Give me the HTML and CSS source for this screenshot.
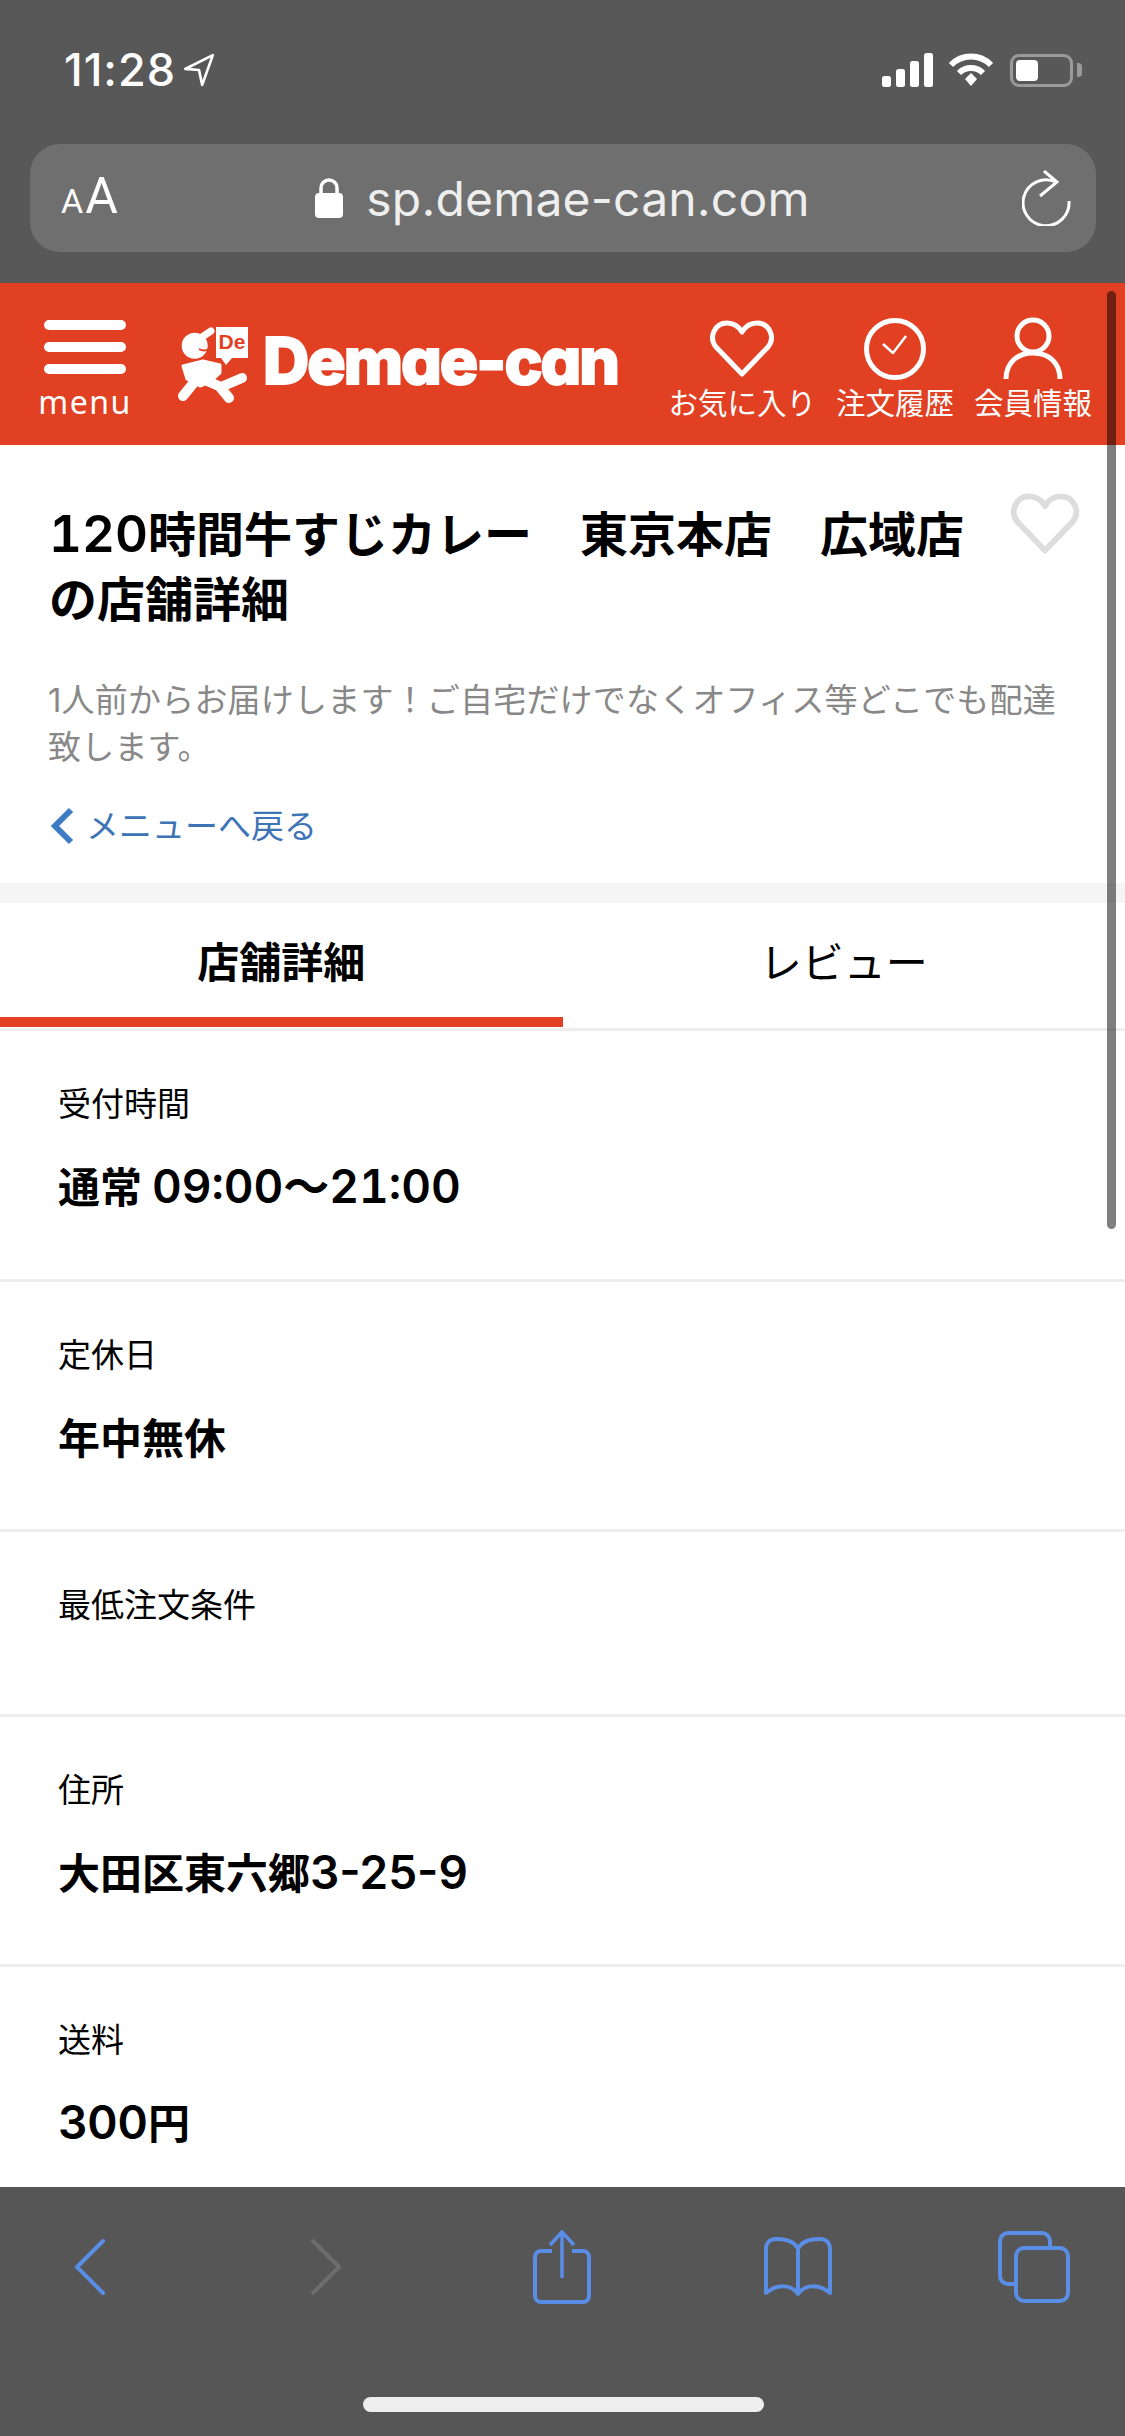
FILE: index.html
```html
<!DOCTYPE html>
<html lang="ja">
<head>
    <meta charset="UTF-8">
    <meta name="viewport" content="width=device-width, initial-scale=1.0">
    <title>120時間牛すじカレー 店舗詳細</title>
    <link rel="stylesheet" href="styles.css">
</head>
<body>
    <div class="screen">
        <div class="browser-top">
            <div class="status">
                <div class="clock">
                    <span class="time">11:28</span>
                    <svg class="loc" width="34" height="34" viewBox="0 0 30 32"><path d="M2 15 L28 2 L18 30 L15 16 Z" fill="none" stroke="#fff" stroke-width="2.5" stroke-linejoin="round"/></svg>
                </div>
                <div class="status-icons">
                    <svg width="52" height="34" viewBox="0 0 52 34"><rect x="0" y="23" width="9" height="11" rx="2.5" fill="#fff"/><rect x="14" y="16" width="9" height="18" rx="2.5" fill="#fff"/><rect x="28" y="8" width="9" height="26" rx="2.5" fill="#fff"/><rect x="42" y="0" width="9" height="34" rx="2.5" fill="#fff"/></svg>
                    <svg width="46" height="34" viewBox="0 0 46 34"><path d="M3 12 A28 28 0 0 1 43 12" fill="none" stroke="#fff" stroke-width="6"/><path d="M11 20 A17 17 0 0 1 35 20" fill="none" stroke="#fff" stroke-width="6"/><path d="M17 26 L23 20 L29 26 L23 33 Z" fill="#fff"/></svg>
                    <div class="battery"><div class="battery-level"></div></div>
                    <div class="battery-cap"></div>
                </div>
            </div>
            <div class="urlbar">
                <span class="aa"><small>A</small>A</span>
                <div class="url">
                    <svg width="28" height="40" viewBox="0 0 28 40"><path d="M6 17 V10 A8 8 0 0 1 22 10 V17" fill="none" stroke="#fff" stroke-width="3.5"/><rect x="0" y="15" width="28" height="25" rx="4" fill="#fff"/></svg>
                    <span>sp.demae-can.com</span>
                </div>
                <svg class="reload" width="50" height="56" viewBox="0 0 50 56"><path d="M34 12 A23 23 0 1 0 47 31" fill="none" stroke="#fff" stroke-width="3"/><path d="M22 1 L35 12 L18 26" fill="none" stroke="#fff" stroke-width="3"/></svg>
            </div>
        </div>

        <div class="content">
            <div class="scrollbar"></div>
            <header class="site-header">
                <div class="menu-btn">
                    <div class="bars"><i></i><i></i><i></i></div>
                    <span>menu</span>
                </div>
                <div class="logo">
                    <svg width="76" height="84" viewBox="0 0 76 84">
                        <circle cx="20.7" cy="23.7" r="13" fill="#fff"/>
                        <path d="M25 17 L37 9" stroke="#fff" stroke-width="7" stroke-linecap="round"/>
                        <path d="M25 27 Q30 30 35 27" fill="none" stroke="#e14023" stroke-width="2"/>
                        <path d="M42 5 H74 V36 H58 L52 43 L47 36 H42 Z" fill="#fff"/>
                        <text x="58" y="27" class="logo-de">De</text>
                        <path d="M9 44 L29 39 L46 43 L46 51 L36 60 L26 64 L13 57 Z" fill="#fff" stroke="#fff" stroke-width="3" stroke-linejoin="round"/>
                        <path d="M22 58 L9 74 M31 58 L47 65 L68 56 M46 65 L55 76" fill="none" stroke="#fff" stroke-width="10" stroke-linecap="round" stroke-linejoin="round"/>
                    </svg>
                    <span class="logo-text">Demae-can</span>
                </div>
                <nav class="header-nav">
                    <div class="nav-item fav">
                        <svg width="66" height="60" viewBox="0 0 66 60"><path d="M33 55 L7 28 C-1 18 6 4 18 4 C25 4 30 8 33 13 C36 8 41 4 48 4 C60 4 67 18 59 28 Z" fill="none" stroke="#fff" stroke-width="5" stroke-linejoin="round"/></svg>
                        <span>お気に入り</span>
                    </div>
                    <div class="nav-item hist">
                        <svg width="64" height="64" viewBox="0 0 64 64"><circle cx="32" cy="32" r="28.5" fill="none" stroke="#fff" stroke-width="5"/><path d="M20 27 L30 36 L43 19" fill="none" stroke="#fff" stroke-width="2.5" stroke-linejoin="round"/></svg>
                        <span>注文履歴</span>
                    </div>
                    <div class="nav-item member">
                        <svg width="60" height="64" viewBox="0 0 60 64"><circle cx="30" cy="19" r="16" fill="none" stroke="#fff" stroke-width="5"/><path d="M3 62 C3 46 14 36 30 36 C46 36 57 46 57 62" fill="none" stroke="#fff" stroke-width="5"/></svg>
                        <span>会員情報</span>
                    </div>
                </nav>
            </header>

            <section class="shop-head">
                <div class="shop-title-row">
                    <h1><span class="num">120</span>時間牛すじカレー　東京本店　広域店<br>の店舗詳細</h1>
                    <svg class="shop-fav" width="70" height="64" viewBox="0 0 66 60"><path d="M33 55 L7 28 C-1 18 6 4 18 4 C25 4 30 8 33 13 C36 8 41 4 48 4 C60 4 67 18 59 28 Z" fill="none" stroke="#ddd" stroke-width="5.5" stroke-linejoin="round"/></svg>
                </div>
                <p class="shop-desc">1人前からお届けします！ご自宅だけでなくオフィス等どこでも配達致します。</p>
                <a class="back-link">
                    <svg width="24" height="38" viewBox="0 0 24 38"><path d="M21 3 L5 19 L21 35" fill="none" stroke="#3d7cc4" stroke-width="6"/></svg>
                    <span>メニューへ戻る</span>
                </a>
            </section>

            <div class="tabs">
                <div class="tab active">店舗詳細</div>
                <div class="tab">レビュー</div>
            </div>

            <dl class="info-row first">
                <dt>受付時間</dt>
                <dd>通常 <span class="num hours">09:00～21:00</span></dd>
            </dl>
            <dl class="info-row">
                <dt>定休日</dt>
                <dd>年中無休</dd>
            </dl>
            <dl class="info-row empty">
                <dt>最低注文条件</dt>
                <dd></dd>
            </dl>
            <dl class="info-row">
                <dt>住所</dt>
                <dd>大田区東六郷<span class="num">3-25-9</span></dd>
            </dl>
            <dl class="info-row">
                <dt>送料</dt>
                <dd><span class="num">300</span>円</dd>
            </dl>
        </div>

        <div class="browser-bottom">
            <div class="toolbar">
                <svg width="34" height="58" viewBox="0 0 34 58"><path d="M30 3 L4 29 L30 55" fill="none" stroke="#5a8de6" stroke-width="4" stroke-linecap="round" stroke-linejoin="round"/></svg>
                <svg width="34" height="58" viewBox="0 0 34 58"><path d="M4 3 L30 29 L4 55" fill="none" stroke="#6d6d6d" stroke-width="4" stroke-linecap="round" stroke-linejoin="round"/></svg>
                <svg width="58" height="74" viewBox="0 0 58 74"><path d="M19 21 H8 A6 6 0 0 0 2 27 V66 A6 6 0 0 0 8 72 H50 A6 6 0 0 0 56 66 V27 A6 6 0 0 0 50 21 H39" fill="none" stroke="#5a8de6" stroke-width="4"/><path d="M29 48 V3 M17 15 L29 2 L41 15" fill="none" stroke="#5a8de6" stroke-width="3.5"/></svg>
                <svg width="68" height="60" viewBox="0 0 68 60"><path d="M34 12 C30 3 20 2 12 2 C6 2 2 6 2 12 V56 C14 46 28 48 34 57 C40 48 54 46 66 56 V12 C66 6 62 2 56 2 C48 2 38 3 34 12 V57" fill="none" stroke="#5a8de6" stroke-width="4" stroke-linejoin="round"/></svg>
                <svg width="72" height="72" viewBox="0 0 72 72"><path d="M18 53 H10 A8 8 0 0 1 2 45 V10 A8 8 0 0 1 10 2 H44 A8 8 0 0 1 52 10 V17" fill="none" stroke="#5a8de6" stroke-width="4"/><rect x="18" y="17" width="52" height="53" rx="8" fill="none" stroke="#5a8de6" stroke-width="4"/></svg>
            </div>
            <div class="home-indicator"></div>
        </div>
    </div>
</body>
</html>
```

FILE: styles.css
```css
* {
    box-sizing: border-box;
}

body {
    margin: 0;
    background-color: #fff;
    font-family: Inter, "Noto Sans CJK JP", sans-serif;
    color: #000;
}

.screen {
    width: 1125px;
    height: 2436px;
    display: flex;
    flex-direction: column;
    overflow: hidden;
}

/* safari chrome */
.browser-top {
    height: 283px;
    flex: none;
    background-color: #585858;
    padding: 50px 29px 0 30px;
}

.status {
    height: 40px;
    display: flex;
    justify-content: space-between;
    align-items: center;
    padding: 0 0 0 34px;
}

.clock {
    display: flex;
    align-items: center;
    gap: 6px;
}

.time {
    font-weight: 500;
    font-size: 45px;
    line-height: 40px;
    letter-spacing: 1px;
    color: #fff;
}

.status-icons {
    display: flex;
    align-items: center;
    gap: 14px;
    padding-right: 14px;
}

.battery {
    width: 63px;
    height: 33px;
    margin-left: 2px;
    border: 3px solid #9a9a9a;
    border-radius: 9px;
    padding: 3px;
}

.battery-level {
    width: 22px;
    height: 100%;
    background-color: #fff;
    border-radius: 4px;
}

.battery-cap {
    width: 5px;
    height: 14px;
    margin-left: -10px;
    background-color: #9a9a9a;
    border-radius: 0 4px 4px 0;
}

.urlbar {
    margin-top: 54px;
    height: 108px;
    background-color: #6f6f6f;
    border-radius: 30px;
    display: grid;
    grid-template-columns: 1fr auto 1fr;
    align-items: center;
    padding: 0 32px 0 31px;
    color: #fff;
}

.aa {
    font-family: Roboto, sans-serif;
    font-size: 50px;
    line-height: 50px;
}

.aa small {
    font-size: 34px;
    margin-right: 2px;
}

.url {
    display: flex;
    align-items: center;
    gap: 23px;
    font-size: 48px;
    letter-spacing: 0.2px;
    color: #eee;
}

.reload {
    justify-self: end;
    margin-right: -8px;
}

/* page area */
.content {
    position: relative;
    flex: 1;
    overflow: hidden;
    background-color: #fff;
}

.scrollbar {
    position: absolute;
    top: 8px;
    right: 9px;
    width: 9px;
    height: 938px;
    background-color: rgba(0, 0, 0, 0.5);
    border-radius: 5px;
}

.site-header {
    height: 162px;
    background-color: #e14023;
    display: flex;
    align-items: flex-start;
    color: #fff;
    padding: 37px 0 0 39px;
}

.menu-btn {
    width: 92px;
    display: flex;
    flex-direction: column;
    align-items: center;
}

.bars {
    width: 82px;
    display: flex;
    flex-direction: column;
    gap: 12px;
}

.bars i {
    display: block;
    height: 10px;
    background-color: #fff;
    border-radius: 5px;
}

.menu-btn span {
    font-family: "Noto Sans", sans-serif;
    font-size: 32px;
    line-height: 36px;
    margin-top: 10px;
    letter-spacing: 1.5px;
    white-space: nowrap;
}

.logo {
    display: flex;
    align-items: flex-start;
    margin-left: 43px;
    margin-top: 2px;
}

.logo-de {
    font-family: "Liberation Sans", sans-serif;
    font-weight: bold;
    font-size: 21px;
    fill: #e14023;
    text-anchor: middle;
}

.logo-text {
    font-weight: 800;
    font-size: 64px;
    line-height: 60px;
    font-feature-settings: "cv11";
    margin: 9px 0 0 13px;
    letter-spacing: -2px;
    -webkit-text-stroke: 2px #fff;
    white-space: nowrap;
}

.header-nav {
    flex: 1;
    display: flex;
    justify-content: flex-end;
    padding-right: 33px;
    margin-top: -3px;
    gap: 20px;
}

.nav-item {
    display: flex;
    flex-direction: column;
    align-items: center;
    font-size: 29.5px;
    line-height: 34px;
}

.nav-item svg {
    height: 64px;
    margin-bottom: 5px;
}

.shop-head {
    height: 458px;
    padding: 57px 0 0 49px;
    border-bottom: 20px solid #f5f5f5;
}

.shop-title-row {
    display: flex;
    align-items: flex-start;
}

h1 {
    width: 931px;
    margin: 0;
    font-size: 48px;
    line-height: 65px;
    font-weight: 700;
}

h1 .num {
    font-size: 51px;
    font-weight: 600;
    font-variant-numeric: tabular-nums;
    line-height: 1;
}

.shop-fav {
    margin: -10px 0 0 30px;
}

.shop-desc {
    width: 1031px;
    margin: 45px 0 0 -1px;
    font-size: 33px;
    line-height: 47px;
    letter-spacing: 0.2px;
    color: #888;
}

.back-link {
    display: flex;
    align-items: center;
    gap: 12px;
    margin: 33px 0 0 1px;
    font-size: 33px;
    line-height: 44px;
    color: #3d74b6;
}

.tabs {
    height: 128px;
    display: flex;
    border-bottom: 3px solid #eee;
}

.tab {
    flex: 1;
    display: flex;
    align-items: center;
    justify-content: center;
    font-size: 42px;
    padding-bottom: 12px;
}

.tab.active {
    font-weight: 700;
    border-bottom: 10px solid #e14023;
    margin-bottom: 1px;
    padding-bottom: 2px;
}

.info-row {
    height: 250px;
    margin: 0;
    padding: 50px 58px 0;
    border-bottom: 3px solid #eee;
}

.info-row.first {
    height: 251px;
}

.info-row.empty {
    height: 185px;
}

.info-row dt {
    font-size: 33px;
    line-height: 46px;
}

.info-row dd {
    margin: 30px 0 0;
    font-size: 42px;
    line-height: 62px;
    font-weight: 700;
}

.info-row .num {
    font-size: 46px;
    font-weight: 600;
    line-height: 1;
}

.info-row .hours {
    font-variant-numeric: tabular-nums;
}

/* bottom toolbar */
.browser-bottom {
    height: 249px;
    flex: none;
    background-color: #565656;
    position: relative;
}

.toolbar {
    display: grid;
    grid-template-columns: repeat(5, 236px);
    justify-items: center;
    align-items: center;
    height: 160px;
    margin-left: -28px;
}

.home-indicator {
    position: absolute;
    left: 363px;
    top: 210px;
    width: 401px;
    height: 15px;
    border-radius: 8px;
    background-color: #eee;
}
```
